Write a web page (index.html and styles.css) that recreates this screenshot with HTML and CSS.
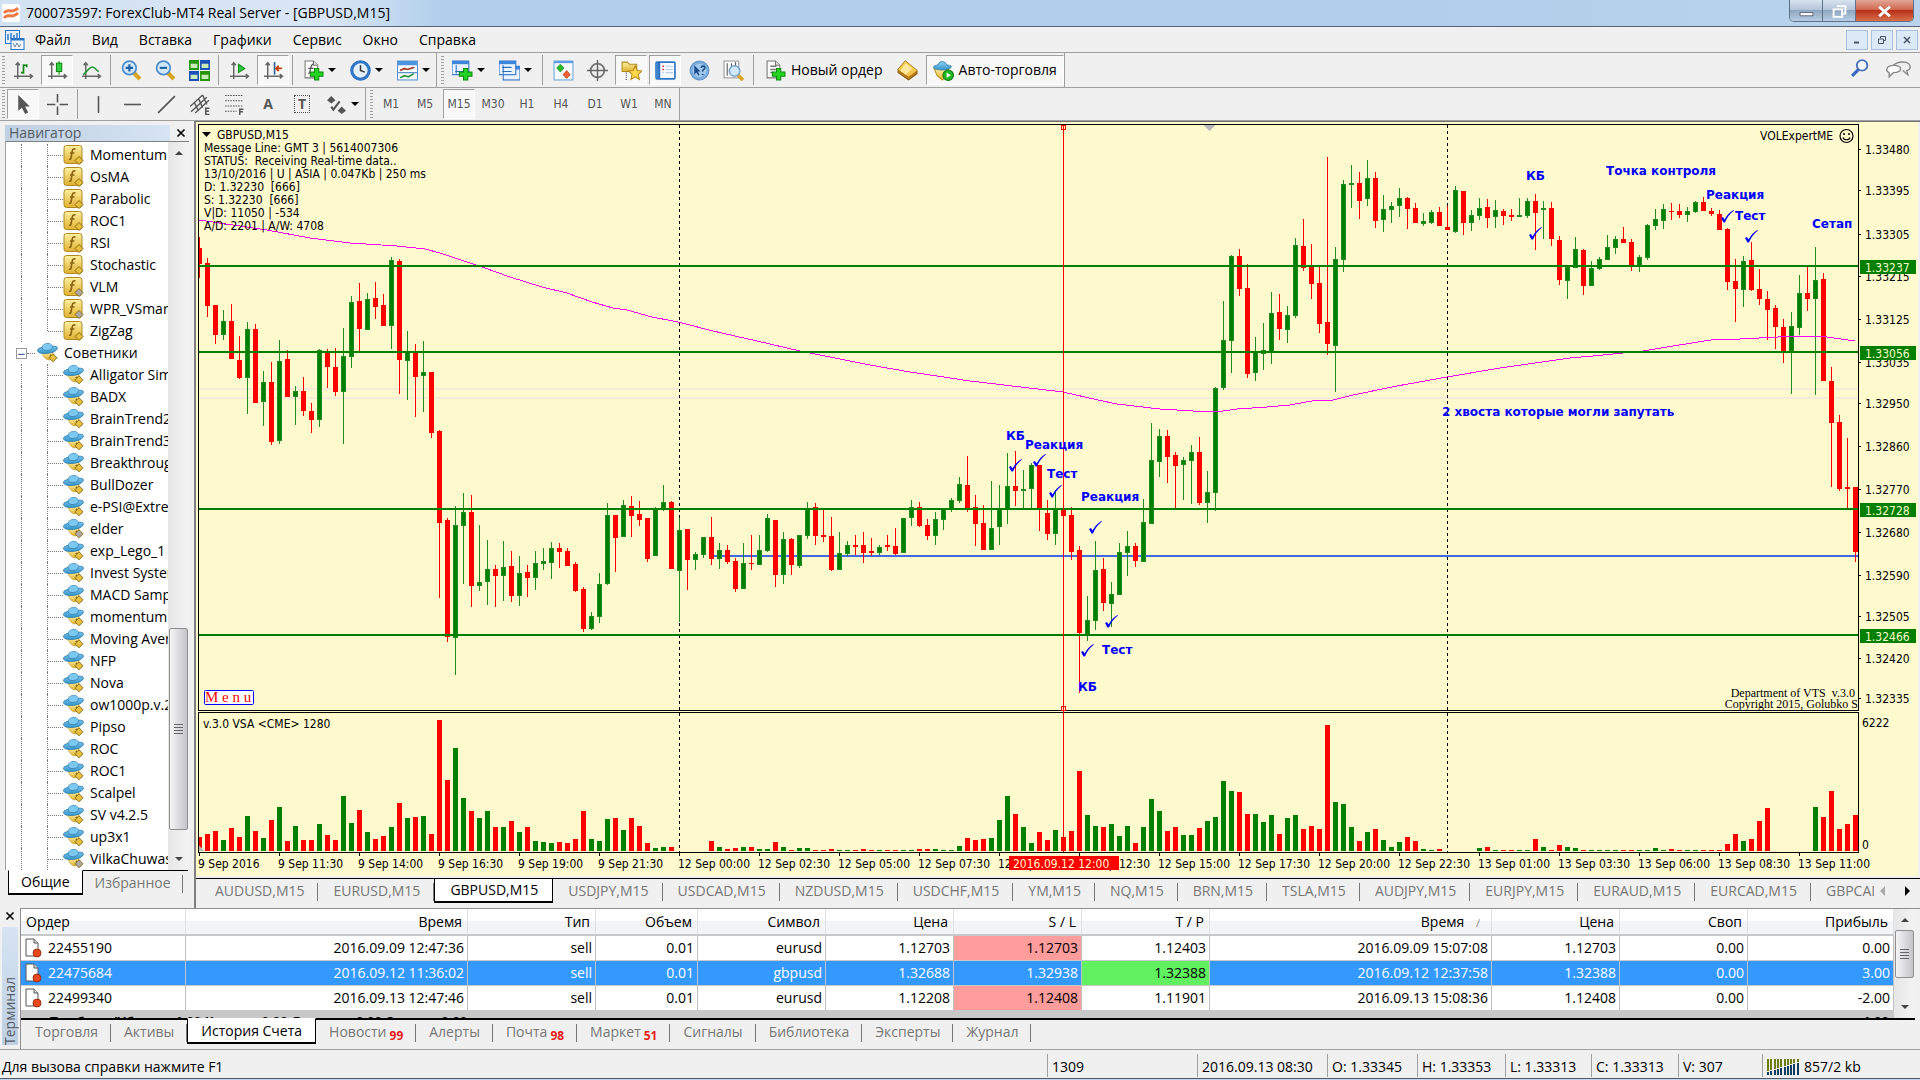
FILE: index.html
```html
<!DOCTYPE html>
<html lang="ru">
<head>
  <meta charset="UTF-8" />
  <meta name="viewport" content="width=device-width, initial-scale=1" />
  <title>700073597: ForexClub-MT4 Real Server - [GBPUSD,M15]</title>
  <link rel="stylesheet" href="styles.css">
</head>
<body>
  <svg class="sprite" aria-hidden="true">
    <defs>
      <linearGradient id="gold" x1="0" y1="0" x2="0" y2="1"><stop offset="0" stop-color="#fff0a0"/><stop offset="1" stop-color="#e0b030"/></linearGradient>
      <linearGradient id="sky" x1="0" y1="0" x2="0" y2="1"><stop offset="0" stop-color="#8cd4f6"/><stop offset="1" stop-color="#3494cc"/></linearGradient>
      <symbol id="i-func" viewBox="0 0 20 20">
        <rect x=".5" y=".5" width="18" height="18" rx="2.500" fill="url(#gold)" stroke="#b08a20"/>
        <path d="M12 4c-2-.6-3 .4-3.300 2.500L7.500 13c-.2 1-.8 1.500-2 1.200M6.500 8h4.500" fill="none" stroke="#8a6410" stroke-width="1.600"/>
        <path class="gem" d="M15.500 11.500l4 4-4 4-4-4z" stroke="#8f6c14"/>
      </symbol>
      <symbol id="i-expert" viewBox="0 0 21 20">
        <path d="M5 9c.5 4 3 7.500 7 8 2 0 3.500-3 4-8z" fill="url(#gold)" stroke="#b8901c" stroke-width=".6"/>
        <path d="M.5 7.500C.8 9.800 4 10.800 9 10.500c6-.3 11-2.700 11.400-5.300.2-1.600-2-2.200-5-2C14.500 1 12.500.4 10.300.5 7.500.6 5.500 2 5.300 4.300 2.500 5 .3 6 .5 7.500z" fill="url(#sky)" stroke="#2b78a8" stroke-width=".8"/>
        <path d="M5.300 4.300C5 7 7 7.600 10 7.500c3.500-.2 5.800-1.500 5.400-4.300" fill="#7cc8f0" stroke="#2b78a8" stroke-width=".7"/>
        <path d="M5.500 4.500c.2-2.500 2-3.700 4.800-3.800 2.600-.1 4.600.8 4.900 3" fill="#7cc8f0"/>
        <path d="M13 12l3 3" stroke="#8f6c14" stroke-width="2"/>
        <path class="gem" d="M16 10.800l4 4-4 4-4-4z" stroke="#8f6c14"/>
      </symbol>
      <symbol id="i-axes" viewBox="0 0 20 20">
        <path d="M4.500 3v15M1 15.500h17M2.500 5l2-2.500 2 2.500M16 13.500l2.500 2-2.500 2" fill="none" stroke="#666" stroke-width="1.400"/>
      </symbol>
      <symbol id="i-doc" viewBox="0 0 20 20">
        <path d="M4 1h8l4 4v12H4z" fill="#fff" stroke="#777"/><path d="M12 1v4h4" fill="#ddd" stroke="#777"/>
      </symbol>
      <symbol id="i-plus" viewBox="0 0 20 20">
        <path d="M11 8h4v3.500h4v4h-4V19h-4v-3.500H7v-4h4z" fill="#25d425" stroke="#0a8a0a"/>
      </symbol>
      <symbol id="i-win" viewBox="0 0 20 20">
        <rect x="1" y="2" width="16" height="13" fill="#eaf4ff" stroke="#2a6cc0"/><path d="M1 2h16v3H1z" fill="#3b86dc"/>
      </symbol>
      <symbol id="i-order" viewBox="0 0 18 20">
        <path d="M2 1h8l4 4v13H2z" fill="#fff" stroke="#555"/><path d="M10 1v4h4" fill="#ddd" stroke="#555"/>
        <circle cx="13" cy="15" r="4" fill="#e8481c" stroke="#8a2408" stroke-width=".8"/>
      </symbol>
    </defs>
  </svg>

  <header class="titlebar">
    <svg class="logo" viewBox="0 0 18 18"><rect width="18" height="18" rx="2" fill="#fff"/><path d="M2 9c4-6 7 2 14-5M2 14c4-6 7 2 14-5" fill="none" stroke="#ee7a45" stroke-width="3"/></svg>
    <h1>700073597: ForexClub-MT4 Real Server - [GBPUSD,M15]</h1>
    <div class="win-buttons">
      <button aria-label="Свернуть"><svg viewBox="0 0 14 12"><path d="M1 7h12v3H1z" fill="#fff" stroke="#556" stroke-width=".8"/></svg></button>
      <button aria-label="Восстановить"><svg viewBox="0 0 14 12"><path d="M4.500 1h8v7h-3M1.500 4h8v7h-8z" fill="none" stroke="#fff" stroke-width="1.800"/></svg></button>
      <button class="win-close" aria-label="Закрыть"><svg viewBox="0 0 14 12"><path d="M2 1.500l10 9M12 1.500l-10 9" stroke="#fff" stroke-width="2.600"/></svg></button>
    </div>
  </header>

  <nav class="menubar">
    <svg class="menu-logo" viewBox="0 0 20 20"><rect x=".5" y=".5" width="14" height="13" fill="#e4f0fc" stroke="#2a74c4"/><path d="M3 4v6M6 3v6M9 5v6M12 3v6" stroke="#2a74c4" stroke-width="1.400"/><rect x="6" y="8.500" width="13" height="11" fill="#f4f9ff" stroke="#2a74c4"/><path d="M6 9.500h13" stroke="#2a74c4" stroke-width="2"/><path d="M8 13l2 4 2-4 2 4 2-3" fill="none" stroke="#68a"/></svg>
    <button>Файл</button>
    <button>Вид</button>
    <button>Вставка</button>
    <button>Графики</button>
    <button>Сервис</button>
    <button>Окно</button>
    <button>Справка</button>
    <div class="mdi-buttons">
      <button aria-label="Свернуть окно"><svg viewBox="0 0 10 10"><path d="M2 7.500h5" stroke="#456" stroke-width="2"/></svg></button>
      <button aria-label="Восстановить окно"><svg viewBox="0 0 10 10"><path d="M3.500 3.500v-2h5v4h-2M1.500 4h5v4.500h-5z" fill="none" stroke="#456"/></svg></button>
      <button aria-label="Закрыть окно"><svg viewBox="0 0 10 10"><path d="M2 2l6 6M8 2l-6 6" stroke="#456" stroke-width="1.500"/></svg></button>
    </div>
  </nav>

  <div class="toolbar-row">
    <div class="toolbar charts">
      <button class="tool" aria-label="Бары"><svg viewBox="0 0 20 20"><use href="#i-axes"/><path d="M10 4v9M10 5h3M7.500 12h3M13 4v3" fill="none" stroke="#118a11" stroke-width="1.600"/></svg></button>
      <button class="tool on" aria-label="Свечи"><svg viewBox="0 0 20 20"><use href="#i-axes"/><path d="M11.500 1v13" stroke="#118a11"/><rect x="9" y="3" width="5" height="8" fill="#30d040" stroke="#118a11"/></svg></button>
      <button class="tool" aria-label="Линия"><svg viewBox="0 0 20 20"><use href="#i-axes"/><path d="M2 14c4-3 7-9 10-7 2 1 3 3 5 4" fill="none" stroke="#239a3a" stroke-width="1.500"/></svg></button>
      <span class="sep"></span>
      <button class="tool" aria-label="Увеличить"><svg viewBox="0 0 20 20"><path d="M12 12l6 6" stroke="#d8a424" stroke-width="4"/><circle cx="8" cy="7.500" r="6.500" fill="#cfe8fa" stroke="#4c8cc8" stroke-width="1.600"/><path d="M4.500 7.500h7M8 4v7" stroke="#1c60a4" stroke-width="2"/></svg></button>
      <button class="tool" aria-label="Уменьшить"><svg viewBox="0 0 20 20"><path d="M12 12l6 6" stroke="#d8a424" stroke-width="4"/><circle cx="8" cy="7.500" r="6.500" fill="#cfe8fa" stroke="#4c8cc8" stroke-width="1.600"/><path d="M4.500 7.500h7" stroke="#1c60a4" stroke-width="2"/></svg></button>
      <button class="tool" aria-label="Плитка"><svg viewBox="0 0 20 20"><path d="M0 0h9.500v9.500H0zM10.500 10.500H20V20h-9.500z" fill="#28960c"/><path d="M10.500 0H20v9.500h-9.500zM0 10.500h9.500V20H0z" fill="#1a50b8"/><path d="M1.500 3.500h6.500v4H1.500zM12 14h6.500v4H12zM12 3.500h6.500v4H12zM1.500 14h6.500v4H1.500z" fill="#c8ecb8"/></svg></button>
      <span class="sep"></span>
      <button class="tool" aria-label="Автопрокрутка"><svg viewBox="0 0 20 20"><use href="#i-axes"/><path d="M9 4l6 4-6 4z" fill="#26c840" stroke="#118a11"/></svg></button>
      <button class="tool on" aria-label="Сдвиг графика"><svg viewBox="0 0 20 20"><use href="#i-axes"/><path d="M11 2v12" stroke="#28689c" stroke-width="1.600"/><path d="M18 8h-5M15 5.500L12.500 8l2.500 2.500" fill="none" stroke="#c8400c" stroke-width="1.800"/></svg></button>
      <span class="sep"></span>
      <button class="tool drop" aria-label="Индикаторы"><svg viewBox="0 0 20 20"><use href="#i-doc" x="-2"/><path d="M5 13c3 0 1-9 5-9M5 8h5" fill="none" stroke="#555" stroke-width="1.200"/><use href="#i-plus"/></svg></button>
      <button class="tool drop" aria-label="Периоды"><svg viewBox="0 0 20 20"><circle cx="10" cy="10" r="8.300" fill="#e4f0fa" stroke="#2f76c6" stroke-width="3"/><path d="M10 5v5l4 1.500" fill="none" stroke="#333" stroke-width="1.400"/></svg></button>
      <button class="tool drop" aria-label="Шаблоны"><svg viewBox="0 0 20 20"><rect x=".5" y="1" width="19" height="18" fill="#f6fbff" stroke="#5a94cc"/><path d="M1 1h18v4H1z" fill="#4b92e0"/><path d="M3 10l4-1.500 3 .5 7-2M1 12h18" fill="none" stroke="#5a94cc"/><path d="M3 10l4-2 3 1 6-2" fill="none" stroke="#b04020" stroke-width="1.600"/><path d="M3 17l4-2 4 1 5-3" fill="none" stroke="#30983c" stroke-width="1.600"/></svg></button>
    </div>
    <div class="toolbar">
      <button class="tool drop" aria-label="Новый график"><svg viewBox="0 0 20 20"><use href="#i-win" x="-1" y="-1"/><path d="M4 5v8M3 11h9" stroke="#2a6cc0"/><use href="#i-plus"/></svg></button>
      <button class="tool drop" aria-label="Профили"><svg viewBox="0 0 20 20"><use href="#i-win" x="3" y="4"/><use href="#i-win" x="-1" y="-1"/><path d="M4 5v8M3 7h9M3 11h9" stroke="#2a6cc0"/></svg></button>
      <span class="sep"></span>
      <button class="tool" aria-label="Обзор рынка"><svg viewBox="0 0 20 20"><rect x="1" y="1" width="18" height="18" fill="#f6fbff" stroke="#6aa6e0"/><path d="M1 2h18" stroke="#5b9ce4" stroke-width="2"/><path d="M7 4l3.500 3.500-3.500 4-3.500-4z" fill="#28b828" stroke="#0c7a0c" stroke-width=".6"/><path d="M13 17.500l-3.500-3.500L13 10l3.500 4z" fill="#f06030" stroke="#a83010" stroke-width=".6"/></svg></button>
      <button class="tool" aria-label="Окно данных"><svg viewBox="0 0 20 20"><circle cx="10" cy="10" r="6.500" fill="none" stroke="#777" stroke-width="1.800"/><path d="M10 0v20M0 10h20" stroke="#666" stroke-width="1.400"/></svg></button>
      <button class="tool on" aria-label="Навигатор"><svg viewBox="0 0 20 20"><path d="M1 2h5l2 2h7v7H1z" fill="url(#gold)" stroke="#b08a20"/><path d="M5 12v7" stroke="#444" stroke-dasharray="1 1"/><path d="M13.500 5.500l2 4.500 4.500.5-3.500 3 1 5-4-2.500-4 2.500 1-5-3.500-3 4.500-.5z" fill="#ffd84a" stroke="#b8881c"/></svg></button>
      <button class="tool on" aria-label="Терминал"><svg viewBox="0 0 20 20"><rect x="1" y="2" width="18" height="16" rx="1" fill="#f4faff" stroke="#2f76c6" stroke-width="1.600"/><path d="M3.500 2v16" stroke="#2f76c6" stroke-width="3"/><path d="M7 6h1.500M7 9h1.500" stroke="#e03020" stroke-width="1.500"/><path d="M7 12h1.500M10 6h7M10 9h7M10 12h7" stroke="#b8d0e8"/></svg></button>
      <button class="tool" aria-label="Справка"><svg viewBox="0 0 20 20"><circle cx="10" cy="10" r="9" fill="#78acdc" stroke="#6896c8"/><circle cx="10" cy="10" r="6.500" fill="#a4cbee"/><path d="M5 5v9l2-2 2 3 1-1-1.500-3H11z" fill="#1c4c88"/><path d="M11.500 7.500c.5-2.500 4-2 3.500.3-.3 1.200-2 1.400-2 3.200M13 13v1.500" fill="none" stroke="#1c4c88" stroke-width="1.600"/></svg></button>
      <button class="tool" aria-label="Тестер"><svg viewBox="0 0 20 20"><rect x="1" y="1" width="14" height="16" fill="#fff" stroke="#999"/><path d="M4 3v12M8 3v5M12 2v5" stroke="#555"/><path d="M14 14l5 5" stroke="#d8a424" stroke-width="3.500"/><circle cx="11" cy="10.500" r="5" fill="#cfe8fa" stroke="#7aa4cc" stroke-width="1.500"/></svg></button>
      <span class="sep"></span>
      <button class="tool wide" id="new-order"><svg viewBox="0 0 20 20"><use href="#i-doc" x="-2"/><path d="M5 6h6M5 9h7M5 12h3" stroke="#777" stroke-width="1.400"/><use href="#i-plus"/></svg>Новый ордер</button>
      <button class="tool" aria-label="MetaEditor"><svg viewBox="0 0 20 20"><path d="M8 1l11 9v3l-8 6-10-7V9z" fill="#b87c14" stroke="#8a5c10"/><path d="M8 1l11 9-8 6L1 9z" fill="#f6c84c"/><path d="M8.500 3l6 5-6 6L3 10z" fill="#ffe9a0"/></svg></button>
      <button class="tool wide on" id="auto-trade"><svg viewBox="0 0 20 20"><path d="M1 8h14l-1 6-5 5-5-4z" fill="url(#gold)" stroke="#b8901c"/><path d="M.5 7C1 9 5 9.500 9 9.500S17 8 17.500 6.500 14 5 13 4.500C12 1 6 0 5 4.500 3 5 .5 5.500.5 7z" fill="url(#sky)" stroke="#2b78a8" stroke-width=".8"/><circle cx="14.500" cy="14.500" r="5" fill="#22b822" stroke="#0c7a0c"/><path d="M13 12l4 2.500-4 2.500z" fill="#fff"/></svg>Авто-торговля</button>
    </div>
    <div class="right-tools">
      <button class="tool" aria-label="Поиск"><svg viewBox="0 0 20 20"><path d="M8 11l-6 6" stroke="#3a68c0" stroke-width="3"/><circle cx="11.500" cy="7" r="5" fill="#f4f8ff" stroke="#4a72b8" stroke-width="1.800"/></svg></button>
      <button class="tool" aria-label="Чат"><svg class="chat" viewBox="0 0 26 20"><path d="M8 10c-3-6 14-9 16-3 1 3-1 5-3 5l1 4-5-4" fill="#eee" stroke="#888" stroke-width="1.300"/><path d="M2 10c1-4 12-4 13 0 0 3-4 4-7 4l-4 4v-4c-2-1-3-2-2-4z" fill="#fff" stroke="#888" stroke-width="1.300"/></svg></button>
    </div>
  </div>

  <div class="toolbar-row second">
    <div class="toolbar">
      <button class="tool on" aria-label="Курсор"><svg viewBox="0 0 20 20"><path d="M5 1v15l3.500-3 3 6 3-1.500-3-5.500H16z" fill="#555"/></svg></button>
      <button class="tool" aria-label="Перекрестие"><svg viewBox="0 0 20 20"><path d="M10 0v8M10 12v8M0 10h8M12 10h8" stroke="#555" stroke-width="1.500"/></svg></button>
      <span class="sep"></span>
      <button class="tool" aria-label="Вертикальная линия"><svg viewBox="0 0 20 20"><path d="M10 2v16" stroke="#555" stroke-width="1.500"/></svg></button>
      <button class="tool" aria-label="Горизонтальная линия"><svg viewBox="0 0 20 20"><path d="M2 10h16" stroke="#555" stroke-width="1.500"/></svg></button>
      <button class="tool" aria-label="Трендовая линия"><svg viewBox="0 0 20 20"><path d="M2 18L18 2" stroke="#555" stroke-width="1.600"/></svg></button>
      <button class="tool" aria-label="Канал"><svg viewBox="0 0 20 20"><path d="M0 12L12 1M1 17L16 3M5 18L18 6M4 8l4 8M8 4l4 9M12 1l4 9" stroke="#555" stroke-width="1.300"/><path d="M18.500 13.500H15v6h3.500M15 16.500h3" fill="none" stroke="#555" stroke-width="1.400"/></svg></button>
      <button class="tool" aria-label="Фибоначчи"><svg viewBox="0 0 20 20"><path d="M1 1.500h17M1 6.500h17M1 11.500h17M1 16.500h11" stroke="#555" stroke-dasharray="1.500 1"/><path d="M18.500 14.500H15v5.500M15 17h3" fill="none" stroke="#555" stroke-width="1.400"/></svg></button>
      <button class="tool letter">A</button>
      <button class="tool letter"><span class="dotted">T</span></button>
      <button class="tool drop" aria-label="Стрелки"><svg viewBox="0 0 20 20"><path d="M5 2l4 4-4 3-4-3zM15 12l4 4-4 3-4-3z" fill="#555"/><path d="M5 12l2 3 6-8" fill="none" stroke="#555" stroke-width="2"/></svg></button>
    </div>
    <div class="toolbar">
      <button class="tool tf">M1</button>
      <button class="tool tf">M5</button>
      <button class="tool tf on">M15</button>
      <button class="tool tf">M30</button>
      <button class="tool tf">H1</button>
      <button class="tool tf">H4</button>
      <button class="tool tf">D1</button>
      <button class="tool tf">W1</button>
      <button class="tool tf">MN</button>
    </div>
  </div>

  <main class="workspace">
    <aside class="navigator">
      <div class="nav-head"><h2>Навигатор</h2><button class="x" aria-label="Закрыть навигатор"><svg viewBox="0 0 10 10"><path d="M1.500 1.500l7 7M8.500 1.500l-7 7" stroke="#000" stroke-width="1.600"/></svg></button></div>
      <div class="nav-body">
        <ul class="tree" id="tree"></ul>
        <div class="scrollbar">
          <i class="up"></i>
          <div class="thumb nav-thumb"><i></i></div>
          <i class="down"></i>
        </div>
      </div>
      <div class="tabs nav-tabs">
        <button class="active">Общие</button>
        <button>Избранное</button>
      </div>
    </aside>

    <section class="chart-window">
      <svg class="chart" id="chart" viewBox="196 122 1722 754"></svg>
      <div class="tabs chart-tabs">
        <button>AUDUSD,M15</button>
        <button>EURUSD,M15</button>
        <button class="active">GBPUSD,M15</button>
        <button>USDJPY,M15</button>
        <button>USDCAD,M15</button>
        <button>NZDUSD,M15</button>
        <button>USDCHF,M15</button>
        <button>YM,M15</button>
        <button>NQ,M15</button>
        <button>BRN,M15</button>
        <button>TSLA,M15</button>
        <button>AUDJPY,M15</button>
        <button>EURJPY,M15</button>
        <button>EURAUD,M15</button>
        <button>EURCAD,M15</button>
        <button class="cut">GBPCAD,M15</button>
        <div class="tab-arrows"><svg viewBox="0 0 36 10"><path d="M7 0v10L2 5z" fill="#aaa"/><path d="M27 0v10l5-5z" fill="#000"/></svg></div>
      </div>
    </section>
  </main>

  <section class="terminal">
    <div class="term-side">
      <button class="x" aria-label="Закрыть терминал"><svg viewBox="0 0 10 10"><path d="M1.500 1.500l7 7M8.500 1.500l-7 7" stroke="#000" stroke-width="1.600"/></svg></button>
      <h2>Терминал</h2>
    </div>
    <div class="term-main">
      <div class="term-body">
        <table class="orders">
          <colgroup><col class="c-order"><col class="c-time"><col class="c-num"><col class="c-vol"><col class="c-num"><col class="c-num"><col class="c-num"><col class="c-num"><col class="c-time"><col class="c-num"><col class="c-num"><col></colgroup>
          <thead>
            <tr><th>Ордер</th><th>Время</th><th>Тип</th><th>Объем</th><th>Символ</th><th>Цена</th><th>S / L</th><th>T / P</th><th>Время <span class="sort">∕</span></th><th>Цена</th><th>Своп</th><th>Прибыль</th></tr>
          </thead>
          <tbody>
            <tr><td><svg class="order-icon"><use href="#i-order"/></svg>22455190</td><td>2016.09.09 12:47:36</td><td>sell</td><td>0.01</td><td>eurusd</td><td>1.12703</td><td class="sl">1.12703</td><td>1.12403</td><td>2016.09.09 15:07:08</td><td>1.12703</td><td>0.00</td><td>0.00</td></tr>
            <tr class="selected"><td><svg class="order-icon"><use href="#i-order"/></svg>22475684</td><td>2016.09.12 11:36:02</td><td>sell</td><td>0.01</td><td>gbpusd</td><td>1.32688</td><td>1.32938</td><td class="tp">1.32388</td><td>2016.09.12 12:37:58</td><td>1.32388</td><td>0.00</td><td>3.00</td></tr>
            <tr><td><svg class="order-icon"><use href="#i-order"/></svg>22499340</td><td>2016.09.13 12:47:46</td><td>sell</td><td>0.01</td><td>eurusd</td><td>1.12208</td><td class="sl">1.12408</td><td>1.11901</td><td>2016.09.13 15:08:36</td><td>1.12408</td><td>0.00</td><td>-2.00</td></tr>
          </tbody>
          <tfoot>
            <tr><td colspan="11">Прибыль/Убыток: 1.00 Кредит: 0.00 Депозит: 0.00 Снятие: 0.00</td><td>1.00</td></tr>
          </tfoot>
        </table>
        <div class="scrollbar">
          <i class="up"></i>
          <div class="thumb term-thumb"><i></i></div>
          <i class="down"></i>
        </div>
      </div>
      <div class="tabs term-tabs">
        <button>Торговля</button>
        <button>Активы</button>
        <button class="active">История Счета</button>
        <button>Новости<sub>99</sub></button>
        <button>Алерты</button>
        <button>Почта<sub>98</sub></button>
        <button>Маркет<sub>51</sub></button>
        <button>Сигналы</button>
        <button>Библиотека</button>
        <button>Эксперты</button>
        <button>Журнал</button>
      </div>
    </div>
  </section>

  <footer class="statusbar">
    <span>Для вызова справки нажмите F1</span>
    <span>1309</span>
    <span>2016.09.13 08:30</span>
    <span>O: 1.33345</span>
    <span>H: 1.33353</span>
    <span>L: 1.33313</span>
    <span>C: 1.33313</span>
    <span>V: 307</span>
    <span class="traffic"><svg viewBox="0 0 32 16"><path d="M0 0h2v12H0zM3 0h2v11H3zM7 0h2v10H7zM10 0h2v9h-2zM13 0h2v8h-2zM17 0h2v7h-2zM20 0h2v6h-2zM23 0h2v5h-2zM26 0h2v4h-2zM30 0h2v3h-2z" fill="#6b7d0c"/><path d="M0 13h2v3H0zM3 12h2v4H3zM7 11h2v5H7zM10 10h2v6h-2zM13 9h2v7h-2zM17 8h2v8h-2zM20 7h2v9h-2zM23 6h2v10h-2zM26 5h2v11h-2zM30 4h2v12h-2z" fill="#123e62"/></svg>857/2 kb</span>
  </footer>
  <div class="taskbar-edge"></div>

  <script src="script.js"></script>
</body>
</html>
```
FILE: styles.css
```css
* {
  box-sizing: border-box;
}

body {
  margin: 0;
  background: #f0f0f0;
  color: #000;
  font-family: "Open Sans", "Noto Sans", sans-serif;
  font-size: 14px;
  line-height: 20px;
  overflow: hidden;
}

button {
  font: inherit;
  color: inherit;
  background: none;
  border: 0;
  padding: 0;
  margin: 0;
}

h1, h2 {
  margin: 0;
  font-size: 14px;
  font-weight: normal;
}

.sprite {
  position: absolute;
  width: 0;
  height: 0;
}

/* title and menu */

.titlebar {
  display: flex;
  align-items: center;
  height: 27px;
  padding-left: 2px;
  gap: 6px;
  background: linear-gradient(90deg, #d3e2f2 0, #d8e6f5 330px, #b1cfeb 440px, #b1cfeb 75%, #b9d3ec);
  border-bottom: 1px solid #56657a;
}

.logo {
  width: 18px;
  height: 18px;
}

.win-buttons {
  display: flex;
  align-self: flex-start;
  margin-left: auto;
  margin-right: 6px;
  border: 1px solid #5f7189;
  border-top: 0;
  border-radius: 0 0 5px 5px;
  overflow: hidden;
}

.win-buttons button {
  width: 33px;
  height: 21px;
  background: linear-gradient(#d6e2ef, #b4c6da 45%, #8ea6c0 50%, #b6cde4);
  border-right: 1px solid #5f7189;
}

.win-buttons .win-close {
  width: 57px;
  border: 0;
  background: linear-gradient(#e4a595, #d0694f 45%, #b83018 50%, #d8704a);
}

.win-buttons svg {
  width: 15px;
  height: 13px;
  vertical-align: middle;
}

.menubar {
  display: flex;
  align-items: center;
  gap: 21px;
  height: 26px;
  padding-left: 5px;
  border-bottom: 1px solid #a0a0a0;
}

.menu-logo {
  width: 20px;
  height: 20px;
  margin-right: -11px;
}

.mdi-buttons {
  display: flex;
  gap: 3px;
  margin-left: auto;
  margin-right: 2px;
}

.mdi-buttons button {
  display: flex;
  align-items: center;
  justify-content: center;
  width: 22px;
  height: 20px;
  background: #dce9f7;
  border: 1px solid #a9c0dc;
}

.mdi-buttons svg {
  width: 10px;
  height: 10px;
}

/* toolbars */

.toolbar-row {
  display: flex;
  height: 35px;
  border-bottom: 1px solid #a0a0a0;
}

.toolbar-row.second {
  height: 32px;
  border-bottom: 0;
}

.toolbar {
  display: flex;
  align-items: center;
  gap: 2px;
  padding-left: 2px;
  border-right: 1px solid #a0a0a0;
}

.toolbar + .toolbar {
  margin-left: 2px;
}

.toolbar::before {
  content: "";
  width: 3px;
  height: 28px;
  background: repeating-linear-gradient(#a0a0a0 0 1px, #f0f0f0 1px 3px);
}

.tool {
  display: flex;
  align-items: center;
  justify-content: center;
  width: 32px;
  height: 30px;
  border: 1px solid transparent;
}

.tool svg {
  width: 21px;
  height: 21px;
}

.tool svg.chat {
  width: 27px;
}

.tool.on {
  background: #f8f8f8;
  border-color: #a0a0a0 #fff #fff #a0a0a0;
}

.tool.drop {
  width: 45px;
  gap: 4px;
}

.tool.drop::after {
  content: "";
  border: 4px solid transparent;
  border-top-color: #000;
  border-bottom: 0;
}

.tool.wide {
  width: auto;
  gap: 5px;
  padding: 0 6px;
}

.tool.tf {
  font-family: "DejaVu Sans Condensed", "DejaVu Sans", sans-serif;
  font-size: 12px;
  color: #555;
}

.tool.letter {
  font-weight: bold;
  font-size: 14px;
  color: #555;
}

.dotted {
  width: 16px;
  line-height: 16px;
  border: 1px dotted #555;
}

.sep {
  width: 1px;
  height: 30px;
  margin: 0 2px;
  background: #a0a0a0;
}

.charts .sep {
  margin: 0 2px 0 1px;
}

.right-tools {
  display: flex;
  gap: 6px;
  margin-left: auto;
  margin-right: 6px;
}

/* workspace */

.workspace {
  display: flex;
  border-top: 1px solid #a0a0a0;
}

.navigator {
  display: flex;
  flex-direction: column;
  flex: none;
  width: 194px;
  padding: 3px 5px 0 5px;
}

.nav-head {
  display: flex;
  align-items: center;
  justify-content: space-between;
  height: 17px;
  padding-right: 3px;
}

.nav-head h2 {
  width: 165px;
  padding-left: 4px;
  line-height: 16px;
  color: #555c66;
  background: linear-gradient(90deg, #bfd0e2, #d6e4f3);
}

.x {
  display: flex;
  width: 10px;
  height: 10px;
}

.nav-body {
  display: flex;
  border-top: 1px solid #808080;
  border-left: 1px solid #a0a0a0;
  background: #fff;
}

.tree {
  flex: 1;
  min-width: 0;
  margin: 0;
  padding: 2px 0 0 15px;
  list-style: none;
  overflow: hidden;
}

.tree li {
  display: flex;
  align-items: center;
  height: 22px;
  white-space: nowrap;
}

.tree .rail {
  flex: none;
  align-self: stretch;
  width: 26px;
  border-left: 1px dotted #777;
}

.tree .rail.inner {
  width: 1px;
}

.tree .rail.half {
  align-self: flex-start;
  height: 11px;
}

.tree .twig {
  flex: none;
  width: 15px;
  border-top: 1px dotted #777;
}

.tree svg {
  flex: none;
  width: 21px;
  height: 20px;
  margin-right: 6px;
  fill: #e8c040;
}

.tree svg.off {
  fill: #aaa;
}

.tree .expander {
  flex: none;
  width: 11px;
  height: 11px;
  margin-left: -5px;
  line-height: 9px;
  text-align: center;
  color: #2a4a9a;
  border: 1px solid #999;
  background: #fff;
}

.tree .expander + .twig {
  width: 8px;
  margin-right: 2px;
}

.scrollbar {
  display: flex;
  flex-direction: column;
  align-items: center;
  flex: none;
  width: 21px;
  background: linear-gradient(90deg, #e6e6e6, #f3f3f3);
}

.scrollbar > i {
  margin: 9px 0;
  border: 4px solid transparent;
}

.scrollbar .up {
  border-top: 0;
  border-bottom-color: #444;
}

.scrollbar .down {
  margin-top: auto;
  border-bottom: 0;
  border-top-color: #444;
}

.thumb {
  display: flex;
  align-items: center;
  justify-content: center;
  width: 19px;
  border: 1px solid #8f8f8f;
  border-radius: 2px;
  background: linear-gradient(90deg, #f5f5f5, #dcdce0 50%, #c4c5c9);
}

.thumb i {
  width: 9px;
  height: 11px;
  background: repeating-linear-gradient(#666 0 1px, transparent 1px 3px);
}

.nav-thumb {
  height: 202px;
  margin-top: auto;
}

.nav-thumb + .down {
  margin-top: 27px;
}

.term-thumb {
  height: 48px;
  margin-top: -1px;
}

/* tabs */

.tabs {
  display: flex;
  align-items: flex-start;
  border-top: 1px solid #000;
  color: #777;
}

.tabs button {
  position: relative;
  height: 23px;
  padding: 0 14px 0 15px;
  white-space: nowrap;
}

.tabs button::after {
  content: "";
  position: absolute;
  right: 0;
  top: 4px;
  height: 18px;
  border-right: 1px solid #777;
}

.tabs .active {
  margin-top: -1px;
  height: 25px;
  color: #000;
  background: #fff;
  border: 1px solid #000;
  border-top-color: #fff;
  border-bottom-width: 2px;
}

.tabs .active::after {
  content: none;
}

.nav-tabs {
  margin: 0 1px 0 3px;
  padding-bottom: 10px;
}

.nav-tabs button {
  padding: 0 12px;
}

/* chart */

.chart-window {
  flex: 1;
  min-width: 0;
  border-left: 2px solid #808080;
  border-top: 1px solid #707070;
}

.chart {
  display: block;
  width: calc(100% - 2px);
  background: #fffacd;
}

.chart-tabs {
  margin-top: 2px;
  padding-left: 4px;
  height: 30px;
  overflow: hidden;
}

.chart-tabs .cut {
  flex: 1;
  min-width: 0;
  overflow: hidden;
  padding-right: 0;
  text-align: left;
}

.chart-tabs .cut::after {
  content: none;
}

.tab-arrows {
  flex: none;
  width: 46px;
  padding-top: 7px;
}

.tab-arrows svg {
  display: block;
  width: 36px;
  height: 10px;
  margin-left: 4px;
}

.axis-text, .info-text {
  font-family: "DejaVu Sans Condensed", "DejaVu Sans", sans-serif;
  font-size: 12px;
}

.note {
  font-family: "DejaVu Sans", sans-serif;
  font-size: 12px;
  font-weight: bold;
  fill: #0000ff;
}

.serif {
  font-family: "Liberation Serif", serif;
  font-size: 12px;
}

.menu-text {
  font-family: "Liberation Serif", serif;
  font-size: 15px;
  fill: #ff0000;
}

.crisp {
  shape-rendering: crispEdges;
}

/* terminal */

.terminal {
  display: flex;
  height: 142px;
  border-bottom: 1px solid #a0a0a0;
}

.term-side {
  display: flex;
  flex-direction: column;
  align-items: center;
  width: 20px;
  padding-top: 2px;
  border-top: 1px solid #f0f0f0;
}

.term-side h2 {
  flex: 1;
  width: 16px;
  margin: 6px 0 4px;
  line-height: 16px;
  writing-mode: vertical-rl;
  transform: rotate(180deg);
  color: #555c66;
  background: linear-gradient(#bfd0e2, #d6e4f3);
}

.term-main {
  flex: 1;
  min-width: 0;
  padding-right: 5px;
  border-top: 1px solid #909090;
  border-left: 1px solid #909090;
}

.term-body {
  display: flex;
  height: 109px;
  background: #c8c8c8;
  overflow: hidden;
}

.orders {
  flex: 1;
  table-layout: fixed;
  border-collapse: separate;
  border-spacing: 0;
  align-self: flex-start;
}

.c-order { width: 165px; }
.c-time { width: 282px; }
.c-num { width: 128px; }
.c-vol { width: 102px; }

.orders th {
  height: 27px;
  padding: 1px 5px 0;
  font-weight: normal;
  text-align: right;
  background: linear-gradient(#fff 45%, #f3f4f6 50%);
  border-right: 1px solid #dfe1e4;
  border-bottom: 2px solid #c8c8c8;
}

.orders th:first-child,
.orders td:first-child {
  text-align: left;
}

.orders td {
  height: 25px;
  padding: 0 3px;
  text-align: right;
  background: #fff;
  border-right: 1px solid #c0c0c0;
  border-bottom: 1px solid #c8c8c8;
}

.orders .sl {
  background: #ff9c9c;
}

.orders .selected td {
  color: #fff;
  background: #3399ff;
}

.orders .selected .tp {
  color: #000;
  background: #60f060;
}

.orders tfoot td {
  padding: 0 4px 0 28px;
  font-weight: bold;
  font-size: 13px;
  vertical-align: top;
  background: #c8c8c8;
  border-color: #c8c8c8;
}

.order-icon {
  width: 18px;
  height: 20px;
  margin-right: 6px;
  vertical-align: top;
}

.sort {
  margin: 0 6px 0 8px;
  font-size: 11px;
  color: #888;
}

.term-tabs {
  border-top-width: 2px;
  height: 31px;
  padding-left: 1px;
}

.term-tabs button {
  padding: 0 13px;
}

.term-tabs .active {
  height: 26px;
  margin-top: -2px;
}

.term-tabs sub {
  margin-left: 3px;
  font-size: 12px;
  font-weight: bold;
  line-height: 0;
  color: #e62020;
}

/* status */

.statusbar {
  display: grid;
  grid-template-columns: 1fr 150px 130px 90px 88px 86px 87px 84px 158px;
  align-items: end;
  height: 28px;
  padding-bottom: 1px;
}

.statusbar span {
  height: 23px;
  padding-left: 4px;
  line-height: 26px;
  border-left: 1px solid #a0a0a0;
  white-space: nowrap;
}

.statusbar span:first-child {
  padding-left: 2px;
  border-left: 0;
}

.statusbar .traffic {
  display: flex;
  align-items: flex-start;
  gap: 5px;
}

.traffic svg {
  width: 32px;
  height: 16px;
  margin-top: 5px;
}

.taskbar-edge {
  height: 2px;
  background: #c3d6ea;
  border-top: 1px solid #4d5a6c;
}
```
FILE: script.js
```js
// navigator tree: name, "-" at the end means a compiled-only item (grey mark)
const indicators = ['Momentum', 'OsMA', 'Parabolic', 'ROC1', 'RSI', 'Stochastic', 'VLM-', 'WPR_VSmart-', 'ZigZag'];
const experts = ['Alligator Simple', 'BADX', 'BrainTrend2', 'BrainTrend3', 'Breakthrough', 'BullDozer', 'e-PSI@Extrem', 'elder-',
  'exp_Lego_1', 'Invest System', 'MACD Sample', 'momentum', 'Moving Average', 'NFP', 'Nova', 'ow1000p.v.2', 'Pipso', 'ROC',
  'ROC1', 'Scalpel', 'SV v4.2.5', 'up3x1', 'VilkaChuwashova-'];

function treeItem(name, icon, last) {
  const off = name.endsWith('-');
  return `<li><span class="rail"></span><span class="rail inner${last ? ' half' : ''}"></span><span class="twig"></span>` +
    `<svg class="${off ? 'off' : ''}"><use href="#${icon}"/></svg>${off ? name.slice(0, -1) : name}</li>`;
}

document.getElementById('tree').innerHTML =
  indicators.map((n, i) => treeItem(n, 'i-func', i === indicators.length - 1)).join('') +
  '<li><span class="expander">−</span><span class="twig"></span><svg><use href="#i-expert"/></svg>Советники</li>' +
  experts.map(n => treeItem(n, 'i-expert', false)).join('');

// colour, high, body top, body bottom, low, volume top (851 = no volume)
const bars = `
r 237 248 264 278 837,r 258 263 306 317 834,r 305 305 335 344 831,g 310 321 335 340 840,r 304 321 359 359 828,r 336 360 378 379 837,
g 322 329 378 414 816,r 324 329 403 403 831,g 371 382 402 426 838,r 362 382 442 445 820,g 340 361 441 444 807,r 350 359 397 397 841,
g 386 391 397 425 826,r 377 391 411 416 840,r 403 411 420 433 840,g 349 350 420 427 824,r 349 352 367 388 835,r 348 367 392 396 840,
g 328 356 392 444 796,g 296 302 357 368 823,r 283 301 329 352 810,g 293 299 330 330 832,r 282 298 307 319 839,r 294 305 326 326 836,
g 257 260 326 349 827,r 259 261 360 394 803,g 331 352 361 400 818,r 344 352 377 417 817,g 341 372 376 412 816,r 372 372 433 438 834,
r 430 431 523 598 720,r 518 520 637 642 780,g 506 525 638 675 748,g 493 512 526 584 798,r 495 512 586 607 811,g 525 582 586 591 818,
g 540 569 582 605 811,r 565 569 576 607 827,g 541 567 576 601 827,r 551 566 596 602 821,g 556 573 596 606 832,r 565 572 578 597 827,
g 551 563 578 590 841,g 548 561 564 570 842,g 542 548 563 579 843,r 543 548 552 568 842,r 548 551 566 566 843,r 562 564 591 592 839,
r 587 589 629 632 811,g 612 616 629 630 839,g 573 584 617 623 841,g 503 515 584 585 819,r 515 515 538 572 818,g 500 505 537 537 830,
r 496 506 516 537 818,r 501 514 520 526 826,r 518 518 559 562 843,g 507 509 556 556 848,g 485 502 509 511 847,r 501 502 569 569 847,
g 518 530 571 622 851,r 529 529 560 590 851,g 552 554 560 570 851,g 537 537 555 558 851,r 517 537 559 565 841,g 543 550 559 569 847,
r 545 550 562 564 849,r 558 561 589 592 848,g 543 563 589 589 847,r 535 563 564 570 847,g 535 550 565 565 849,g 514 518 551 552 849,
r 520 520 575 587 842,g 532 539 575 584 847,r 538 539 565 575 850,g 535 535 566 568 848,g 502 509 536 539 848,r 503 507 536 545 850,
r 509 535 537 542 850,r 517 536 570 571 849,g 532 553 570 570 850,g 541 545 554 556 850,r 535 545 547 555 850,r 532 545 553 563 849,
r 538 551 553 556 850,g 545 547 553 555 850,r 535 545 547 551 850,r 528 546 554 555 850,g 518 518 553 553 850,g 500 507 518 526 850,
r 502 507 526 527 849,r 519 525 536 540 849,g 512 519 536 545 849,g 509 509 520 530 850,g 498 500 509 512 850,g 477 484 501 503 846,
r 456 485 509 512 838,r 495 507 524 546 840,r 505 523 550 550 839,g 481 528 550 550 838,g 485 509 527 545 820,g 453 486 509 524 796,
r 451 486 491 506 814,g 470 489 491 509 827,g 463 465 489 509 843,r 465 465 509 531 832,r 500 513 534 540 840,g 490 509 534 545 830,
r 509 510 516 516 837,r 507 515 552 560 831,r 546 550 633 693 771,g 596 620 635 641 815,g 541 570 621 630 826,r 558 569 603 611 827,
g 582 594 604 627 824,g 543 552 595 595 836,g 531 546 553 576 826,r 543 546 561 567 843,g 499 522 562 562 827,g 423 460 524 524 799,
g 429 436 462 477 811,r 430 436 457 483 831,r 452 455 466 508 827,g 457 460 465 500 835,g 445 452 461 504 835,r 437 452 503 505 828,
g 471 492 503 523 821,g 387 388 493 511 817,g 301 340 388 390 781,g 255 256 341 373 791,r 249 256 289 296 792,r 264 288 374 378 814,
g 337 352 373 381 814,g 323 350 354 370 822,g 292 313 352 364 815,r 294 312 329 340 834,g 306 315 330 343 818,g 238 245 316 318 815,
r 219 246 268 271 829,r 244 266 284 299 826,r 266 283 324 333 829,r 157 322 344 355 725,g 247 259 346 392 802,g 180 184 260 272 804,
g 165 183 185 208 827,r 172 183 201 219 841,g 160 178 199 206 832,r 172 178 221 228 829,g 195 209 220 232 840,g 202 206 210 223 847,
g 188 198 206 217 842,r 197 198 209 229 837,r 203 208 223 223 841,g 213 221 224 226 849,g 210 212 223 224 850,r 207 212 226 226 849,
r 206 227 230 230 851,g 186 190 232 233 851,r 191 191 223 235 851,g 210 215 223 231 851,g 198 208 216 220 848,r 199 207 218 228 847,
g 200 210 217 228 850,r 209 211 216 225 850,r 209 215 217 221 850,g 198 215 217 217 850,g 198 201 216 218 850,r 194 201 213 250 839,
g 201 208 210 239 847,r 202 208 239 246 850,r 236 240 280 285 845,g 265 267 281 299 847,g 237 249 268 268 848,r 249 250 286 295 850,
g 261 268 286 286 850,g 257 259 269 270 850,g 235 247 260 260 850,g 236 239 248 254 850,r 227 239 243 243 850,r 239 242 266 271 850,
g 255 257 266 272 850,g 224 225 258 260 850,g 209 219 226 230 848,g 204 209 221 229 850,r 203 211 212 220 849,r 204 211 215 218 850,
g 207 211 215 222 850,g 201 202 212 213 850,r 197 202 211 211 850,r 208 211 214 216 850,r 210 214 230 230 850,r 228 229 282 290 844,
r 259 281 289 322 834,g 256 261 290 307 841,r 242 260 290 291 839,r 269 289 299 305 821,r 291 299 310 340 808,r 305 308 327 349 851,
r 319 327 352 363 851,g 312 326 351 394 851,g 275 293 328 335 851,r 267 293 299 311 851,g 247 280 299 395 807,r 273 279 381 381 817,
r 367 381 423 487 791,r 415 422 489 491 829,r 438 487 489 509 824,r 487 487 552 562 815`;

const average = '199,220 233,225 267,230 310,238 350,243 397,246 425,249 440,253 482,267 510,277 542,287 567,293 592,302 613,308 627,310 ' +
  '652,317 678,322 713,331 757,341 800,351 830,357 870,365 910,372 937,376 970,381 1004,385 1063,392 1098,400 1117,404 1160,409 ' +
  '1193,411 1223,411 1237,409 1267,407 1290,405 1317,400 1333,400 1353,395 1397,386 1447,377 1500,368 1570,358 1593,356 1643,351 ' +
  '1667,347 1717,339 1740,339 1797,336 1827,337 1855,341';

const rect = (x, y, w, h, fill, extra = '') => `<rect x="${x}" y="${y}" width="${w}" height="${h}" fill="${fill}" ${extra}/>`;
const text = (x, y, cls, str, extra = '') => `<text x="${x}" y="${y}" class="${cls}" ${extra} xml:space="preserve">${str}</text>`;

let candles = '';
let volumes = '';
bars.trim().split(/,\s*/).forEach((row, i) => {
  const [side, high, top, bottom, low, vol] = row.split(' ').map((v, k) => k ? Number(v) : v);
  const x = 199 + 8 * i;
  const edge = side === 'g' ? '#228b22' : '#ff0000';
  const fill = side === 'g' ? '#008000' : '#ff0000';
  candles += rect(x, high, 1, low - high, edge) + rect(x - 2, top, 5, bottom - top, edge);
  if (side === 'g' && bottom - top > 2) candles += rect(x - 1, top + 1, 3, bottom - top - 2, fill);
  if (vol < 851) volumes += rect(x - 2, vol, 5, 851 - vol, fill);
});

let out = '<defs><clipPath id="plot"><rect x="199" y="125" width="1659" height="727"/></clipPath></defs>';
out += '<g class="crisp" clip-path="url(#plot)">';
out += rect(199, 388, 1659, 2, '#f8ead8') + rect(199, 397, 1659, 2, '#f8ead8');
for (const x of [679, 1447]) {
  out += `<path d="M${x}.5 125v585M${x}.5 713v139" stroke="#000" stroke-dasharray="3 3"/>`;
}
out += rect(714, 555, 1144, 2, '#4169e1');
out += candles + volumes;
out += `<polyline points="${average}" fill="none" stroke="#ff00ff"/>`;
for (const y of [265, 351, 508, 634]) out += rect(199, y, 1659, 2, '#008000');
out += '<path d="M1204 125h11l-5.500 6z" fill="#b8b8b8"/><path d="M199 846v5h5z" fill="#b8b8b8"/>';
out += '</g>';

// frames of the price pane and the volume pane
out += '<g class="crisp" fill="none" stroke="#000"><path d="M198.500 124.500h1660v586h-1660zM198.500 712.500h1660v140h-1660z"/>';
out += '<path d="M1063.500 125v727M1061.500 125.500h4v4h-4zM1061.500 706.500h4v4h-4z" stroke="#ff0000"/></g>';

// price scale
const prices = [['1.33480', 149], ['1.33395', 190], ['1.33305', 234], ['1.33215', 276], ['1.33125', 319], ['1.33035', 362], ['1.32950', 403],
  ['1.32860', 446], ['1.32770', 489], ['1.32680', 532], ['1.32590', 575], ['1.32505', 616], ['1.32420', 658], ['1.32335', 698]];
for (const [p, y] of prices) out += rect(1859, y, 2, 1, '#000') + text(1865, y + 5, 'axis-text', p);
for (const [p, y] of [['1.33237', 267], ['1.33056', 353], ['1.32728', 510], ['1.32466', 636]]) {
  out += rect(1860, y - 7, 56, 14, '#008000') + text(1865, y + 5, 'axis-text', p, 'fill="#fffacd"');
}
out += text(1862, 727, 'axis-text', '6222') + text(1862, 849, 'axis-text', '0');

// time scale
['9 Sep 2016', '9 Sep 11:30', '9 Sep 14:00', '9 Sep 16:30', '9 Sep 19:00', '9 Sep 21:30', '12 Sep 00:00', '12 Sep 02:30', '12 Sep 05:00',
  '12 Sep 07:30', '12 Sep 10:00', '12 Sep 12:30', '12 Sep 15:00', '12 Sep 17:30', '12 Sep 20:00', '12 Sep 22:30', '13 Sep 01:00',
  '13 Sep 03:30', '13 Sep 06:00', '13 Sep 08:30', '13 Sep 11:00'].forEach((label, k) => {
  out += rect(199 + 80 * k, 853, 1, 3, '#000') + text(198 + 80 * k, 868, 'axis-text', label);
});
out += rect(1009, 856, 110, 14, '#ff0000') + text(1013, 868, 'axis-text', '2016.09.12 12:00', 'fill="#fffacd"');

// info block
out += '<path d="M202 132h9l-4.500 5z"/>';
out += text(217, 139, 'info-text', 'GBPUSD,M15');
['Message Line: GMT 3 | 5614007306', 'STATUS:  Receiving Real-time data..', '13/10/2016 | U | ASIA | 0.047Kb | 250 ms', 'D: 1.32230  [666]',
  'S: 1.32230  [666]', 'V|D: 11050 | -534', 'A/D: 2201 | A/W: 4708'].forEach((line, k) => {
  out += text(204, 152 + 13 * k, 'info-text', line);
});
out += text(203, 728, 'info-text', 'v.3.0 VSA &lt;CME&gt; 1280');
out += text(1760, 140, 'info-text', 'VOLExpertME');
out += '<g fill="none" stroke="#000" stroke-width="1.200"><circle cx="1846.500" cy="136" r="6.500"/><path d="M1843 137.500c1 3 6 3 7 0"/></g>' +
  '<circle cx="1844" cy="134" r="1"/><circle cx="1849" cy="134" r="1"/>';
out += '<rect x="204.500" y="690.500" width="49" height="14" rx="1" fill="#fff" stroke="#0000ff"/>' + text(205, 702, 'menu-text', 'M e n u');
out += text(1855, 697, 'serif', 'Department of VTS  v.3.0', 'text-anchor="end"') + text(1858, 708, 'serif', 'Copyright 2015, Golubko S', 'text-anchor="end"');

// trader's notes
const notes = [[1006, 440, 'КБ'], [1025, 449, 'Реакция'], [1047, 478, 'Тест'], [1081, 501, 'Реакция'], [1102, 654, 'Тест'], [1078, 691, 'КБ'],
  [1526, 180, 'КБ'], [1442, 416, '2 хвоста которые могли запутать'], [1606, 175, 'Точка контроля'], [1706, 199, 'Реакция'], [1735, 220, 'Тест'],
  [1812, 228, 'Сетап']];
for (const [x, y, t] of notes) out += text(x, y, 'note', t);

const ticks = [[1009, 459], [1033, 454], [1049, 485], [1089, 521], [1105, 615], [1081, 644], [1529, 227], [1721, 210], [1745, 230]];
for (const [x, y] of ticks) {
  out += `<path transform="translate(${x} ${y})" d="M0 8l2-1 1.500 2.500Q7 3 12.500 0l.5.500Q7 5 4 12.500H2.500z" fill="#0000ff"/>`;
}

document.getElementById('chart').innerHTML = out;
```
